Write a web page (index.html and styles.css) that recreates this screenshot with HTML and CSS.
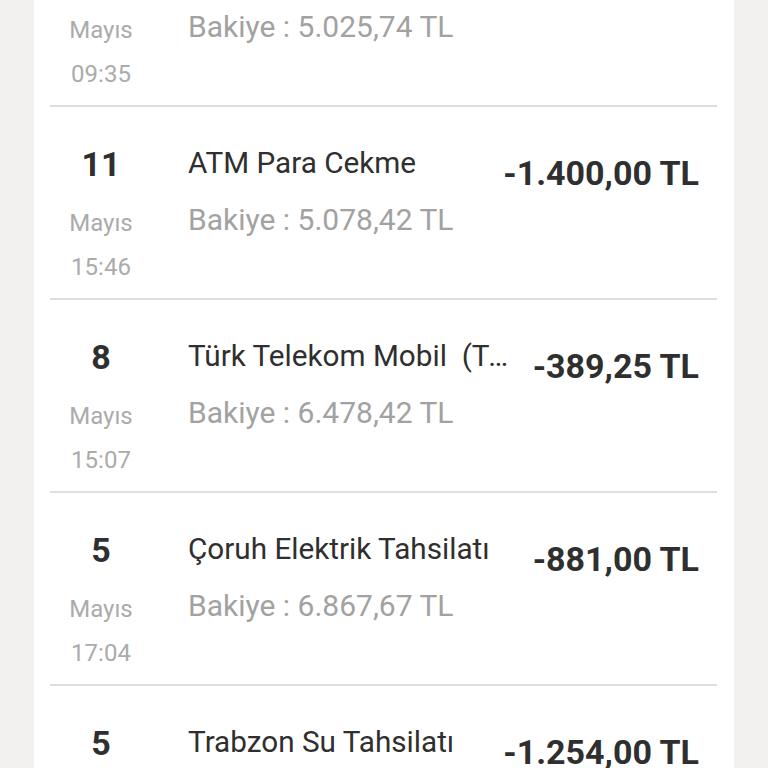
FILE: index.html
```html
<!DOCTYPE html>
<html lang="tr">
<head>
<meta charset="utf-8">
<title>Hesap Hareketleri</title>
<link rel="stylesheet" href="styles.css">
</head>
<body>
<div class="card">
  <div class="list">
    <div class="row">
      <div class="date"><div class="day">12</div><div class="month">Mayıs</div><div class="time">09:35</div></div>
      <div class="info"><div class="title">Market Alışverişi</div><div class="balance">Bakiye : 5.025,74 TL</div></div>
      <div class="amount">-52,68 TL</div>
    </div>
    <div class="row">
      <div class="date"><div class="day">11</div><div class="month">Mayıs</div><div class="time">15:46</div></div>
      <div class="info"><div class="title">ATM Para Cekme</div><div class="balance">Bakiye : 5.078,42 TL</div></div>
      <div class="amount">-1.400,00 TL</div>
    </div>
    <div class="row">
      <div class="date"><div class="day">8</div><div class="month">Mayıs</div><div class="time">15:07</div></div>
      <div class="info"><div class="title">Türk Telekom Mobil  (Türk Telekom)</div><div class="balance">Bakiye : 6.478,42 TL</div></div>
      <div class="amount">-389,25 TL</div>
    </div>
    <div class="row">
      <div class="date"><div class="day">5</div><div class="month">Mayıs</div><div class="time">17:04</div></div>
      <div class="info"><div class="title">Çoruh Elektrik Tahsilatı</div><div class="balance">Bakiye : 6.867,67 TL</div></div>
      <div class="amount">-881,00 TL</div>
    </div>
    <div class="row">
      <div class="date"><div class="day">5</div><div class="month">Mayıs</div><div class="time">16:52</div></div>
      <div class="info"><div class="title">Trabzon Su Tahsilatı</div><div class="balance">Bakiye : 7.748,67 TL</div></div>
      <div class="amount">-1.254,00 TL</div>
    </div>
  </div>
</div>
</body>
</html>
```
FILE: styles.css
```css
html, body {
  margin: 0;
  padding: 0;
  height: 100%;
  overflow: hidden;
}
body {
  background: #f2f1ef;
  font-family: Roboto, "Noto Sans", "Liberation Sans", sans-serif;
  color: #2f2f2f;
}
.card {
  margin-left: 34px;
  width: 700px;
  min-height: 100%;
  background: #ffffff;
}
.list {
  margin-top: -86px;
  padding: 0 17px 0 16px;
}
.row {
  box-sizing: border-box;
  height: 193px;
  border-bottom: 2px solid #dedede;
  display: grid;
  grid-template-columns: 102px minmax(0, 1fr) auto;
  column-gap: 24px;
  padding: 37px 18px 0 0;
  align-items: start;
}
.date {
  text-align: center;
}
.day {
  font-size: 34px;
  line-height: 40px;
  font-weight: 700;
  color: #2f2f2f;
}
.month, .time {
  font-size: 24px;
  line-height: 44px;
  color: #ababab;
}
.month {
  margin-top: 17px;
}
.info {
  margin-left: 12px;
  padding-top: 2px;
}
.title {
  font-size: 29.7px;
  line-height: 34px;
  color: #2f2f2f;
  white-space: pre;
  overflow: hidden;
  text-overflow: ellipsis;
}
.balance {
  margin-top: 22px;
  font-size: 30px;
  line-height: 36px;
  color: #a2a2a2;
  white-space: nowrap;
}
.amount {
  padding-top: 9px;
  font-size: 34px;
  line-height: 40px;
  font-weight: 700;
  color: #2f2f2f;
  text-align: right;
  white-space: nowrap;
}
```
